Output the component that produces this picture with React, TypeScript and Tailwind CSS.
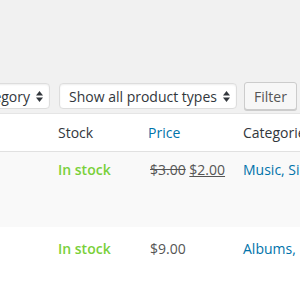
import React from "react";

const Arrows = () => (
  <svg width="7" height="11" viewBox="0 0 7 11" className="shrink-0">
    <path d="M3.5 0 L7 4.5 H0 Z" fill="#32373c" />
    <path d="M3.5 11 L7 6.5 H0 Z" fill="#32373c" />
  </svg>
);

const Select = ({ label }: { label: string }) => (
  <div className="flex shrink-0 items-center gap-[6px] h-[26px] pl-[9px] pr-[6px] bg-white border border-[#dddddd] rounded-[4px] shadow-[inset_0_1px_2px_rgba(0,0,0,0.07)] text-[#32373c] whitespace-nowrap">
    <span>{label}</span>
    <Arrows />
  </div>
);

const products = [
  { oldPrice: "$3.00", price: "$2.00", cats: "Music, Singles", h: "h-[75px] pt-[7px]", bg: "bg-[#f9f9f9]" },
  { oldPrice: "", price: "$9.00", cats: "Albums, Music", h: "h-[75px] pt-[11px]", bg: "bg-white" },
];

export default function App() {
  return (
    <div
      className="w-[300px] h-[300px] overflow-hidden bg-[#f1f1f1] text-[14px]"
      style={{ fontFamily: '"Open Sans", "Noto Sans", sans-serif' }}
    >
      {/* Filters */}
      <div className="flex items-start pt-[83px] h-[113px]">
        <div className="w-[50px] flex justify-end shrink-0">
          <Select label="Select a category" />
        </div>
        <div className="ml-[9px] w-[177px] shrink-0 flex">
          <Select label="Show all product types" />
        </div>
        <button className="ml-[8px] shrink-0 w-[53px] h-[28px] -mt-[1px] bg-[#f7f7f7] border border-[#cccccc] rounded-[3px] shadow-[0_1px_0_#cccccc] text-[#555555]">
          Filter
        </button>
      </div>

      {/* Table */}
      <div className="border-t border-[#e5e5e5] bg-white">
        <div className="flex h-[38px] items-center border-b border-[#e1e1e1] bg-white whitespace-nowrap">
          <div className="w-[58px] shrink-0" />
          <div className="w-[90px] shrink-0 text-[#32373c]">Stock</div>
          <div className="w-[95px] shrink-0 text-[#0073aa]">Price</div>
          <div className="shrink-0 text-[#32373c]">Categories</div>
        </div>
        {products.map((p, i) => (
          <div key={i} className={`flex whitespace-nowrap ${p.h} ${p.bg}`}>
            <div className="w-[58px] shrink-0" />
            <div className="w-[90px] shrink-0 font-semibold text-[#7ad03a]">In stock</div>
            <div className="w-[95px] shrink-0 pl-[2px] text-[#555555]">
              {p.oldPrice ? (
                <>
                  <span className="line-through">{p.oldPrice}</span>{" "}
                  <span className="underline">{p.price}</span>
                </>
              ) : (
                <span>{p.price}</span>
              )}
            </div>
            <div className="shrink-0 text-[#0073aa]">{p.cats}</div>
          </div>
        ))}
      </div>
    </div>
  );
}
